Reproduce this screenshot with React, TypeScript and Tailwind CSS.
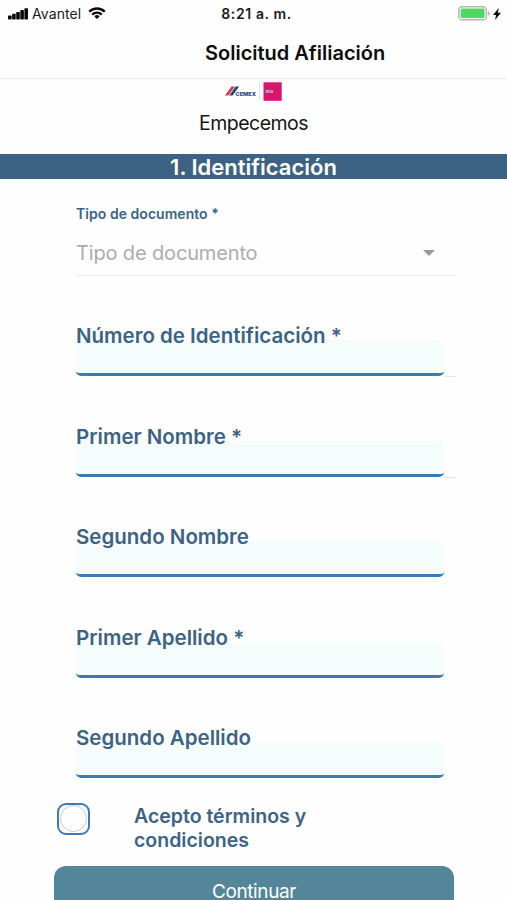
import { useState } from 'react'

type Field = {
  name: string
  label: string
  // the first rows keep the list divider, visible to the right of the input
  divider?: boolean
}

const FIELDS: Field[] = [
  { name: 'id', label: 'Número de Identificación *', divider: true },
  { name: 'firstName', label: 'Primer Nombre *', divider: true },
  { name: 'middleName', label: 'Segundo Nombre' },
  { name: 'lastName', label: 'Primer Apellido *' },
  { name: 'secondLastName', label: 'Segundo Apellido' },
]

function StatusBar() {
  return (
    <div className="grid grid-cols-3 items-center h-[27px] pl-2 pr-[5px] text-[#1a1a1a] shrink-0">
      <div className="flex items-center">
        <svg className="w-5 h-3" viewBox="0 0 20 12" fill="#0a0a0a">
          <rect x="0" y="7.5" width="3.6" height="4" rx="0.8" />
          <rect x="4.1" y="5.8" width="3.6" height="5.7" rx="0.8" />
          <rect x="8.2" y="4" width="3.6" height="7.5" rx="0.8" />
          <rect x="12.3" y="2" width="3.6" height="9.5" rx="0.8" />
          <rect x="16.4" y="0.2" width="3.6" height="11.3" rx="0.8" />
        </svg>
        <span className="ml-1 text-[14px] leading-none tracking-[0.1px]">Avantel</span>
        <svg className="ml-[7px] w-[18px] h-3 -mt-0.5" viewBox="0 0 18 12" fill="none" stroke="#0a0a0a" strokeWidth="2.4">
          <path d="M1.2 4.6a11.2 11.2 0 0 1 15.6 0" />
          <path d="M4.2 7.6a6.9 6.9 0 0 1 9.6 0" />
          <path d="M9 12 6.4 9.4a3.7 3.7 0 0 1 5.2 0Z" fill="#0a0a0a" stroke="none" />
        </svg>
      </div>
      <span className="pl-[3px] text-center text-[14px] leading-none font-semibold tracking-[0.6px] whitespace-nowrap">8:21 a. m.</span>
      <div className="flex items-center justify-end">
        <svg className="w-8 h-[15px]" viewBox="0 0 32 15">
          <rect x="0.8" y="0.8" width="27.6" height="13" rx="3.4" fill="#fff" stroke="#b5b5b5" strokeWidth="1.5" />
          <rect x="2.6" y="2.6" width="24" height="9.4" rx="1.5" fill="#4cd964" />
          <path d="M30 5a2.6 2.6 0 0 1 0 4.8Z" fill="#b0b0b0" />
        </svg>
        <svg className="ml-[3px] mr-px w-2 h-3" viewBox="0 0 8 12" fill="#0a0a0a">
          <path d="M5.8 0 0 6.9h3.1L2 12l6-7.2H4.8Z" />
        </svg>
      </div>
    </div>
  )
}

function Logo() {
  return (
    <svg className="w-[58px] h-5 shrink-0" viewBox="0 0 58 20">
      <path d="M0 13.5 6.5 4.5h3.4L3.4 13.5Z" fill="#e0343f" />
      <path d="M4.2 13.5 10.7 4.5h3.4L7.6 13.5Z" fill="#1c4585" />
      <text x="10.5" y="13.5" fill="#1c4585" fontSize="5.4" fontWeight="800" textLength="20.5" lengthAdjust="spacingAndGlyphs">
        CEMEX
      </text>
      <path d="M34.5 0v18" stroke="#e0e0e4" />
      <rect x="38.5" y="0.3" width="18.2" height="18.5" fill="#d8156c" />
      <text x="40.5" y="10.9" fill="#fbd3e4" fontSize="3.8" fontWeight="700" textLength="7.5">
        mia
      </text>
    </svg>
  )
}

function TextField({ label, name, divider }: Field) {
  return (
    <div className="flex flex-col h-[100.5px]">
      <label htmlFor={name} className="relative z-10 h-6 text-[20.5px] leading-[25px] font-semibold text-[#3c6383] whitespace-nowrap">
        {label}
      </label>
      <div className="w-[380px] -mt-[7px] flex items-end">
        <input
          id={name}
          className="block w-[368px] h-9 rounded-[5px] bg-[#f5fcfc] border-b-[3px] border-[#3d7ab5] outline-none px-2"
        />
        {divider && <div className="flex-1 h-px -mb-px bg-[#e6e6e6]" />}
      </div>
    </div>
  )
}

export default function App() {
  const [accepted, setAccepted] = useState(false)

  return (
    <div className="flex flex-col w-full h-[900px] overflow-hidden bg-[#fefefe] font-['Inter',sans-serif]">
      <StatusBar />

      <header className="h-[52px] shrink-0 border-b border-[#ebebeb] pl-[205px] flex items-center">
        <h1 className="text-[20px] leading-6 font-semibold text-[#0c0c0c] whitespace-nowrap">Solicitud Afiliación</h1>
      </header>

      <div className="flex flex-col items-center h-[75px] pt-[3px] shrink-0">
        <Logo />
        <p className="mt-[9px] text-[19.5px] leading-6 tracking-[-0.5px] text-[#151515]">Empecemos</p>
      </div>

      <h2 className="h-[25px] shrink-0 bg-[#3c6383] text-center text-[22px] leading-[26px] font-semibold text-white">
        1. Identificación
      </h2>

      <form className="flex flex-col pl-[76px] shrink-0">
        <p className="mt-[26px] text-[14px] leading-[18px] font-semibold tracking-[0.04px] text-[#3c6383]">Tipo de documento *</p>
        <button type="button" className="mt-[7px] w-[380px] h-[46px] border-b border-[#ededed] flex items-center justify-between pr-[21px] text-[20px] tracking-[-0.15px] text-[#acacac]">
          <span>Tipo de documento</span>
          <svg className="w-3 h-[6px]" viewBox="0 0 12 6" fill="#999">
            <path d="M0 0h12L6 6Z" />
          </svg>
        </button>

        <div className="mt-[47px]">
          {FIELDS.map(f => <TextField key={f.name} {...f} />)}
        </div>
      </form>

      <div className="-mt-[23px] pl-[57px] h-[63px] flex items-start shrink-0">
        <button
          type="button"
          role="checkbox"
          aria-checked={accepted}
          aria-label="Acepto términos y condiciones"
          onClick={() => setAccepted(!accepted)}
          className="w-[33px] h-8 rounded-[9px] border-[2.5px] border-[#3d7ab5] flex items-center justify-center"
        >
          <span className={accepted ? 'w-[27px] h-[27px] rounded-full border border-[#c9c9c9] bg-[#3d7ab5]' : 'w-[27px] h-[27px] rounded-full border border-[#c9c9c9]'} />
        </button>
        <p className="mt-px ml-11 w-[200px] text-[19.5px] leading-6 font-semibold text-[#3c6383]">Acepto términos y condiciones</p>
      </div>

      {/* runs past the bottom of the screen */}
      <button type="button" className="ml-[54px] w-[400px] h-[52px] shrink-0 rounded-[12px] bg-[#54869a] text-[19px] leading-6 tracking-[-0.4px] text-white">
        Continuar
      </button>
    </div>
  )
}
